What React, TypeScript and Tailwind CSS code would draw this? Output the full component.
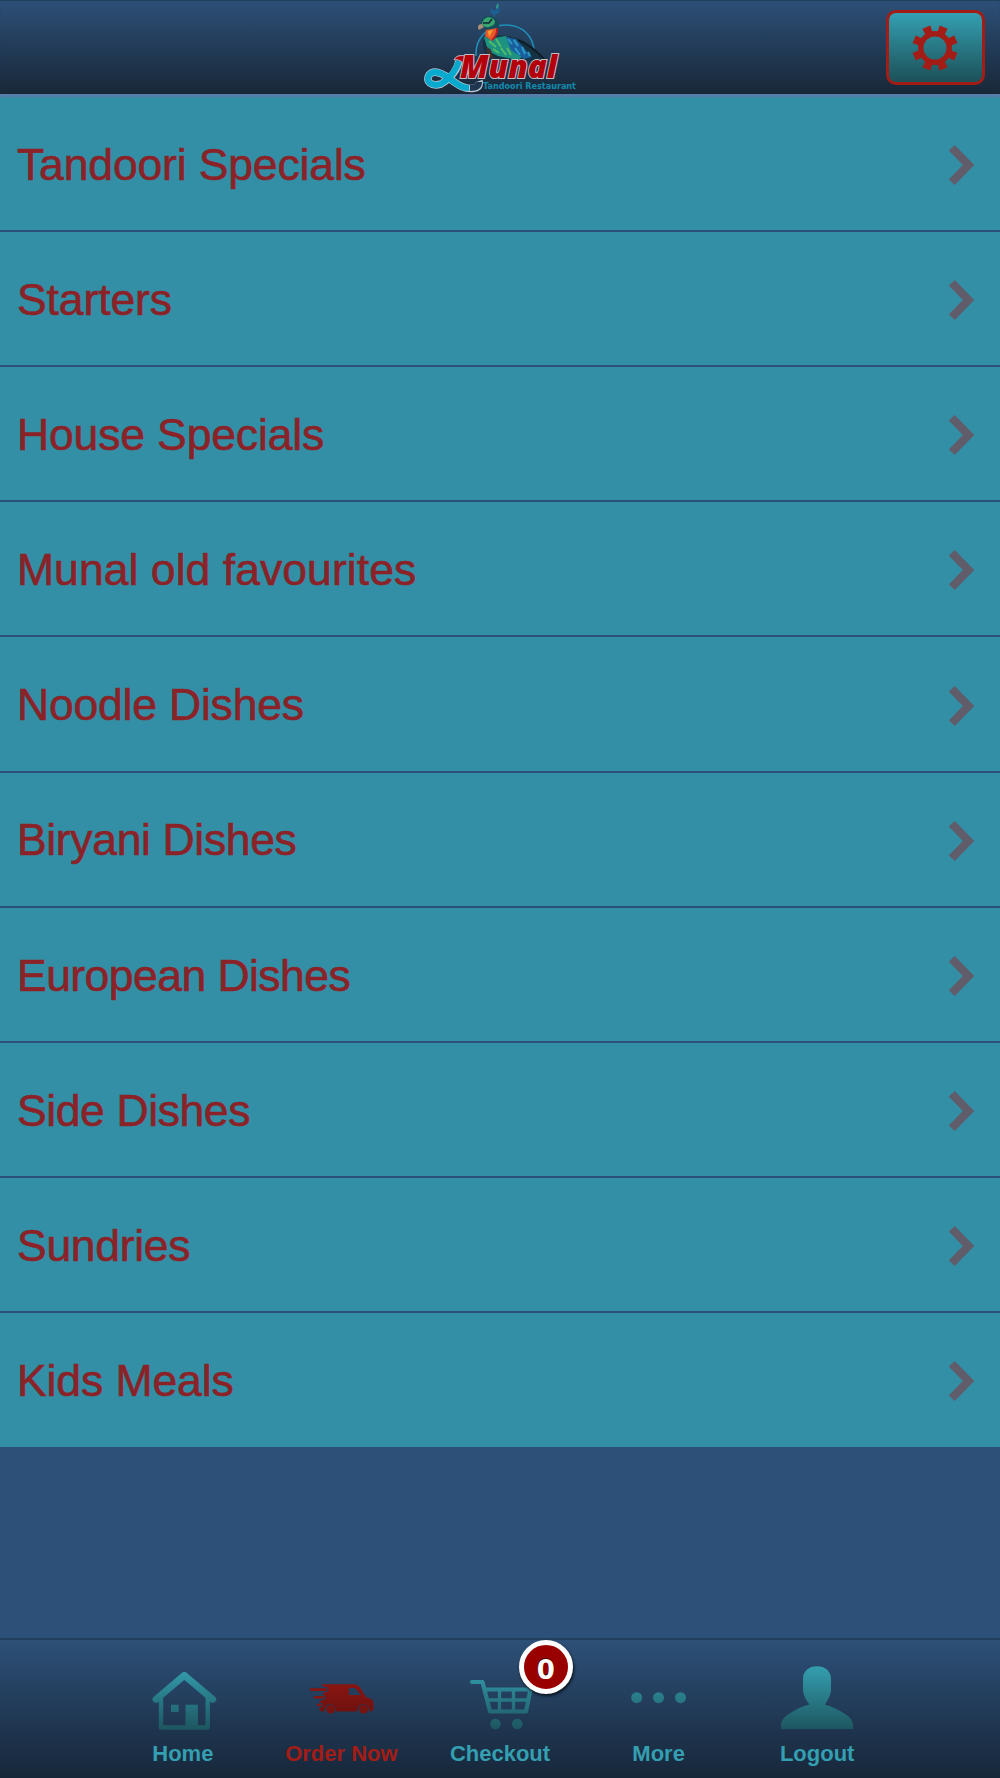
import type { ReactNode } from "react";

const categories = [
  { name: "Tandoori Specials", tracking: "tracking-[-0.15px]" },
  { name: "Starters", tracking: "tracking-[-0.1px]" },
  { name: "House Specials", tracking: "tracking-[-0.15px]" },
  { name: "Munal old favourites", tracking: "tracking-[0.05px]" },
  { name: "Noodle Dishes", tracking: "tracking-[-0.2px]" },
  { name: "Biryani Dishes", tracking: "tracking-[-0.35px]" },
  { name: "European Dishes", tracking: "tracking-[-0.55px]" },
  { name: "Side Dishes", tracking: "tracking-[-0.4px]" },
  { name: "Sundries", tracking: "tracking-[-0.3px]" },
  { name: "Kids Meals", tracking: "tracking-[-0.1px]" },
];

const Logo = () => (
  <svg className="w-[180px] h-[94px]" viewBox="0 0 180 94">
    <path d="M66 56 C65 38 78 25 96 25 C112 25 123 36 124 50" fill="none" stroke="#1d8fb8" strokeWidth="1.6" />
    {/* crest */}
    <path d="M84 17 L85 11" stroke="#1c6c9c" strokeWidth="1" />
    <path d="M86 9 C86 5 87 4 88 3 C89 6 89 8 86 9 Z" fill="#2b9c92" />
    <path d="M80 8 L84 11 L90 7 L89 13 L84 15 L81 13 Z" fill="#1c5f96" />
    {/* tail and wing */}
    <path d="M73 40 C80 36 92 34 102 37 C114 39 123 46 136 60 L80 60 C75 54 72 47 73 40 Z" fill="#143241" />
    <path d="M74 37 L84 38 L95 36 L107 41 L117 53 L108 60 L88 56 L78 51 Z" fill="#1d9280" />
    <path d="M96 37 L106 39 L122 57 L114 59 L101 50 Z" fill="#195f9f" />
    <path d="M98 39 l4 5 M104 40 l4 6 M105 48 l5 7 M112 47 l3 7 M118 52 l2 4" stroke="#2d9cc5" strokeWidth="2" />
    <path d="M79 41 l7 6 M86 39 l5 8 M91 48 l5 7 M83 49 l6 4 M97 48 l4 7" stroke="#55bc67" strokeWidth="1.8" />
    <path d="M108 40 Q121 45 135 60" fill="none" stroke="#101820" strokeWidth="1.5" />
    <path d="M76 46 L81 50 L84 60 L78 58 Z" fill="#3c3030" />
    {/* head */}
    <path d="M71 25 C71 18 75 15 81 16 C87 17 90 22 89 29 C88 34 85 39 82 41 L76 37 L77 29 Z" fill="#164d5b" />
    <path d="M72 24 C73 19 77 16 82 18 C86 20 86 25 81 26 C78 28 75 28 72 24 Z" fill="#36a66c" />
    <path d="M73 23 l6 0 l3 -4" fill="none" stroke="#172638" strokeWidth="1.6" />
    <path d="M72 24 C68 24 67 27 69 30 L74 27 Z" fill="#a98c76" />
    <path d="M76 30 L88 28 C89 34 84 36 82 41 L75 36 Z" fill="#e7592a" />
    <path d="M78 31 L83 30 L79 37 Z" fill="#f5a02d" />
    <path d="M87 28 Q88 35 82 40" fill="none" stroke="#b51d22" strokeWidth="2" />
    {/* ribbon */}
    <path d="M49 61 C48 68 42 78 31 84 C21 87 15 81 19 75 C24 69 32 73 40 79 C48 85 55 90 65 88 C69 87 70 84 69 81" fill="none" stroke="#b3c4d2" strokeWidth="7.6" />
    <path d="M49 61 C47 68 41 78 31 84 C21 87 15 81 19 75 C24 69 32 73 40 79 C48 85 52 88 59 88" fill="none" stroke="#08a9ce" strokeWidth="6" />
    <path d="M60 88 C66 88 69 86 69 82" fill="none" stroke="#203650" strokeWidth="6" />
    <path d="M44 60 Q46 54 56 56 L55 66 Q50 58 44 60 Z" fill="#b3000b" stroke="#c5bdc7" strokeWidth="1" />
    <text
      x="50"
      y="77.5"
      textLength="97"
      lengthAdjust="spacingAndGlyphs"
      className="font-['Open_Sans',sans-serif] text-[31px] font-extrabold italic"
      fill="#b3000b"
      stroke="#c4bcc6"
      strokeWidth="2"
      paintOrder="stroke"
    >
      Munal
    </text>
    <text
      x="73"
      y="88.5"
      textLength="93"
      lengthAdjust="spacingAndGlyphs"
      className="font-['DejaVu_Sans',sans-serif] text-[8px] font-bold"
      fill="#138bae"
    >
      Tandoori Restaurant
    </text>
  </svg>
);

const gearTeeth = [22.5, 67.5, 112.5, 157.5, 202.5, 247.5, 292.5, 337.5];

const GearIcon = () => (
  <svg className="mr-[2px] size-[46px]" viewBox="-23 -23 46 46">
    <circle r="14.2" fill="none" stroke="#a31c16" strokeWidth="5.4" />
    {gearTeeth.map((angle) => (
      <path key={angle} d="M-3.6 -14 L-4.3 -22.5 H4.3 L3.6 -14 Z" fill="#a31c16" transform={`rotate(${angle})`} />
    ))}
  </svg>
);

const Chevron = () => (
  <svg className="w-[26px] h-[42px]" viewBox="0 0 26 42">
    <path d="M2.8 3.8 L19.5 21 L2.8 38.2" fill="none" stroke="#605c6a" strokeWidth="8.2" />
  </svg>
);

// Icons share one vertical fade, measured over the 64px icon box
const Icon = ({ id, from, to, children }: { id: string; from: string; to: string; children: ReactNode }) => (
  <svg className="size-16" viewBox="0 0 64 64">
    <defs>
      <linearGradient id={id} gradientUnits="userSpaceOnUse" x1="0" y1="0" x2="0" y2="64">
        <stop offset="0" stopColor={from} />
        <stop offset="1" stopColor={to} />
      </linearGradient>
    </defs>
    {children}
  </svg>
);

const HomeIcon = () => (
  <Icon id="home" from="#349fb0" to="#1d555f">
    <g fill="none" stroke="url(#home)">
      <path d="M5 33.3 L33.3 9.3 L61.7 33.3" strokeWidth="7" strokeLinecap="round" strokeLinejoin="round" />
      <path d="M10 32 V61.5 H56.7 V32" strokeWidth="4.4" strokeLinejoin="round" />
    </g>
    <path d="M20 38.8 h7.7 v7.2 h-7.7 Z M34.5 38.8 h12.4 v22 h-12.4 Z" fill="url(#home)" />
  </Icon>
);

const VanIcon = () => (
  <Icon id="van" from="#9b1712" to="#5d100e">
    <g transform="translate(-2)">
      <path
        d="M14 18.3 H46 C50 18.3 52 20 54 23 L59 31 L64 33 C66 34 66.5 36 66.5 38 V43 C66.5 45 65 45.5 62.5 45.5 C62 40.5 59.5 38 56.2 38 C53 38 50.5 40.5 50 45.5 H29 C29 40.5 26.5 38 23.2 38 C20 38 17.7 40.5 17.3 45.5 H14 L12 43 L15 39 L12 36 L18 32 L15 28 L21 24 Z"
        fill="url(#van)"
      />
      <path d="M42 22 H48 L54 29 H42 Z" fill="#233f5e" />
      <path d="M4 23.6 H19 M8 31.3 H16 M11 39 H13" stroke="#223e5c" strokeWidth="5" strokeLinecap="round" />
      <path d="M4 23.6 H19 M8 31.3 H16 M11 39 H13" stroke="#85150f" strokeWidth="2.6" strokeLinecap="round" />
      <g fill="#751411">
        <circle cx="23.7" cy="43" r="4.6" />
        <circle cx="56.5" cy="43" r="4.6" />
      </g>
    </g>
  </Icon>
);

const CartIcon = () => (
  <Icon id="cart" from="#349fb0" to="#1d555f">
    <g fill="none" stroke="url(#cart)" strokeWidth="4.2" strokeLinejoin="round">
      <path d="M4 16 H14.5 L22 45.5 H58 L62.5 23.5 H17" strokeLinecap="round" />
      <path d="M19 34 H60 M31.5 23 V45 M45.5 23 V45" strokeWidth="3.3" />
    </g>
    <circle cx="27.5" cy="58" r="5.3" fill="url(#cart)" />
    <circle cx="49.2" cy="58" r="5.3" fill="url(#cart)" />
  </Icon>
);

const MoreIcon = () => (
  <Icon id="more" from="#349fb0" to="#1d555f">
    <g fill="url(#more)">
      <circle cx="9.7" cy="31.7" r="5.5" />
      <circle cx="31.5" cy="31.7" r="5.5" />
      <circle cx="53.5" cy="31.7" r="5.5" />
    </g>
  </Icon>
);

const UserIcon = () => (
  <Icon id="user" from="#349fb0" to="#1d555f">
    <path
      d="M32 0.3 C40 0.3 46 5 46 13 V23 C46 29 43 34 40 38.5 C47 41 52 43 57 46 C64 50 68 54 68 59 V63 H-4 V59 C-4 54 0 50 7 46 C12 43 17 40 24.5 38.5 C21 34 18 29 18 23 V13 C18 5 24 0.3 32 0.3 Z"
      fill="url(#user)"
    />
  </Icon>
);

const tabs = [
  { label: "Home", icon: <HomeIcon /> },
  { label: "Order Now", icon: <VanIcon />, active: true },
  { label: "Checkout", icon: <CartIcon />, badge: 0 },
  { label: "More", icon: <MoreIcon /> },
  { label: "Logout", icon: <UserIcon /> },
];

const App = () => (
  <div className="flex h-[1778px] w-[1000px] flex-col overflow-hidden bg-[#2d5078] font-['Liberation_Sans',Arial,sans-serif]">
    <header className="grid h-[96.7px] shrink-0 grid-cols-[1fr_180px_1fr] border-b-3 border-[#567eab] bg-linear-to-b from-[#2d5078] to-[#182839] shadow-[inset_0_1px_1px_#223d59]">
      <div className="col-start-2">
        <Logo />
      </div>
      <button className="mt-[10px] mr-[15px] ml-auto flex h-[75px] w-[99px] items-center justify-center rounded-[10px] border-3 border-[#a31c16] bg-linear-to-b from-[#34a0b2] to-[#1c5159]">
        <GearIcon />
      </button>
    </header>

    <ul className="shrink-0">
      {categories.map(({ name, tracking }) => (
        <li
          key={name}
          className="flex h-[135.2px] items-center justify-between border-b-2 border-[#2d5078] bg-[#328fa5] pt-[3px] pr-[25px] pl-[17px] text-[#8b2227] last:h-[133.2px] last:border-b-0"
        >
          <span className={`text-[44.5px] leading-none [-webkit-text-stroke:0.6px_#8b2227] ${tracking}`}>{name}</span>
          <Chevron />
        </li>
      ))}
    </ul>

    <nav className="mt-auto flex h-[140px] shrink-0 justify-center border-t-2 border-[#223f5e] bg-linear-to-b from-[#2d5078] to-[#17273a]">
      {tabs.map((tab) => (
        <a key={tab.label} className="relative flex w-[158.6px] flex-col items-center pt-[26px] [&>svg]:overflow-visible">
          {tab.icon}
          <span
            className={
              tab.active
                ? "mt-[12px] text-[22px] leading-[24px] font-bold text-[#a31c16]"
                : "mt-[12px] text-[22px] leading-[24px] font-bold text-[#349fb0]"
            }
          >
            {tab.label}
          </span>
          {tab.badge !== undefined && (
            <span className="absolute top-0 left-[98px] flex size-[54px] items-center justify-center rounded-full border-[5px] border-white bg-[#990000] pt-[5px] font-['DejaVu_Sans',sans-serif] text-[26px] leading-none font-bold text-white shadow-[1px_2px_3px_#0a1420] [text-shadow:0_-1px_1px_#400]">
              {tab.badge}
            </span>
          )}
        </a>
      ))}
    </nav>
  </div>
);

export default App;
